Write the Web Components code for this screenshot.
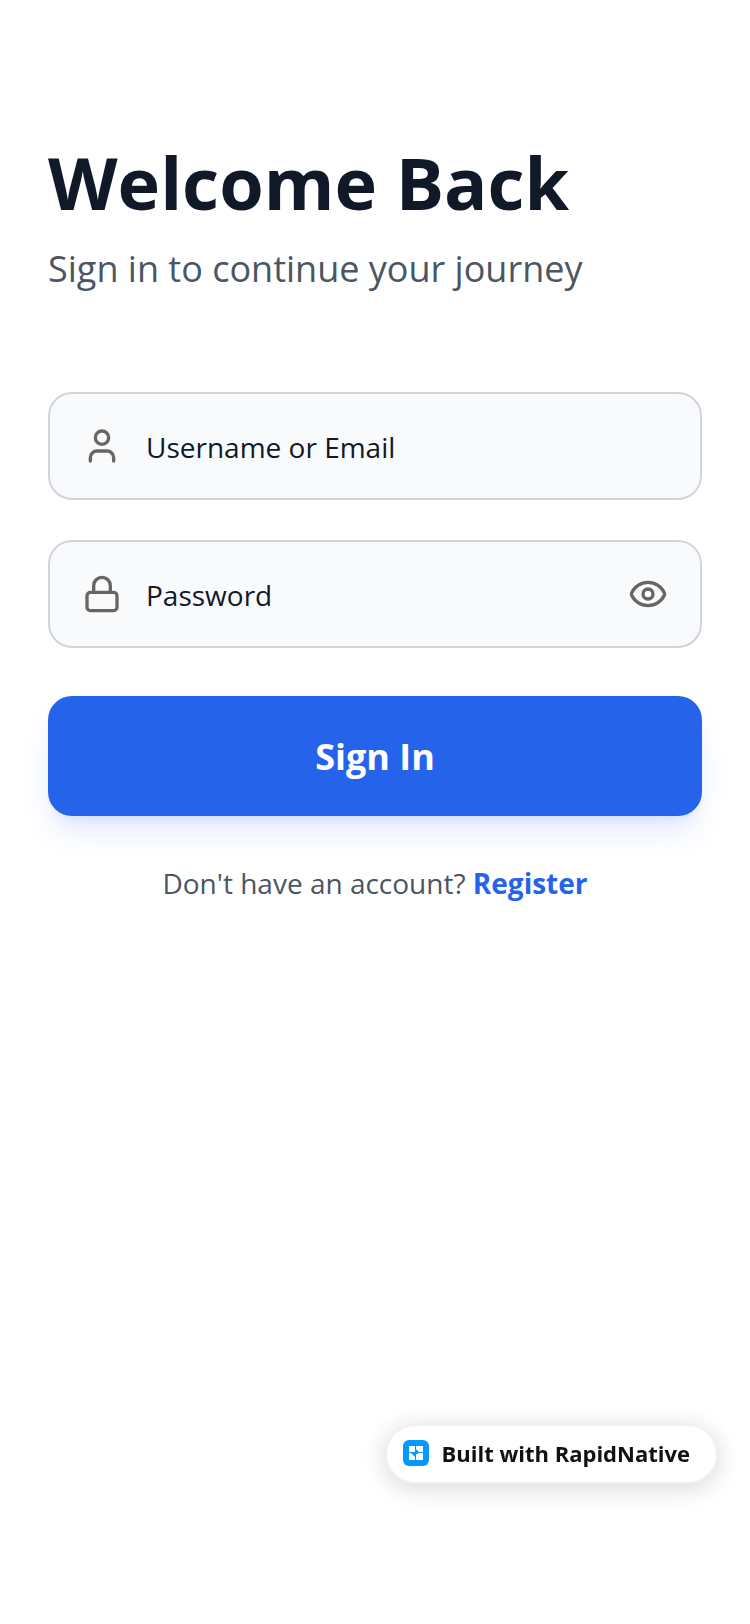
<!DOCTYPE html>
<html lang="en">
<head>
<meta charset="utf-8">
<meta name="viewport" content="width=device-width, initial-scale=1">
<title>Sign In</title>
<style>
  html, body { margin: 0; background: #fff; }
  body { font-family: "Open Sans", "Noto Sans", sans-serif; color: #111827; }
</style>
</head>
<body>
<sign-in-page></sign-in-page>

<template id="page-tpl">
  <style>
    :host { display: block; min-height: 100vh; box-sizing: border-box; padding: 144px 48px 48px; }
    form { display: flex; flex-direction: column; gap: 40px; margin: 0; }
    .note { margin: 40px 0 0; text-align: center; font-size: 28px; line-height: 54px; color: #4b5563; }
    .note a { color: #2563eb; font-weight: 700; text-decoration: none; }
    primary-button { margin-top: 8px; }
    brand-badge { position: fixed; right: 32px; bottom: 140px; }
  </style>
  <main>
    <page-heading>
      <span slot="title">Welcome Back</span>
      <span slot="subtitle">Sign in to continue your journey</span>
    </page-heading>
    <form>
      <text-field type="text" label="Username or Email">
        <line-icon slot="icon" name="user"></line-icon>
      </text-field>
      <text-field type="password" label="Password">
        <line-icon slot="icon" name="lock"></line-icon>
        <icon-button slot="action" label="Show password"><line-icon name="eye"></line-icon></icon-button>
      </text-field>
      <primary-button>Sign In</primary-button>
    </form>
    <p class="note">Don't have an account? <a href="#register">Register</a></p>
  </main>
  <brand-badge>Built with RapidNative</brand-badge>
</template>

<template id="heading-tpl">
  <style>
    :host { display: block; margin-bottom: 96px; }
    h1 { margin: 0 0 22px; font-size: 72px; line-height: 76px; font-weight: 700; color: #111827; }
    p { margin: 0; font-size: 36px; line-height: 54px; color: #4b5563; }
  </style>
  <h1><slot name="title"></slot></h1>
  <p><slot name="subtitle"></slot></p>
</template>

<template id="field-tpl">
  <style>
    :host { display: block; }
    label { display: flex; align-items: center; gap: 24px; box-sizing: border-box; height: 108px; padding: 0 32px; background: #f9fafb; border: 2px solid #d1d5db; border-radius: 24px; }
    input { flex: 1; min-width: 0; padding: 2px 0 0; border: 0; outline: 0; background: none; font: inherit; font-size: 28px; line-height: 40px; color: #111827; }
    input::placeholder { color: #111827; opacity: 1; }
  </style>
  <label><slot name="icon"></slot><input><slot name="action"></slot></label>
</template>

<template id="icon-button-tpl">
  <style>
    :host { display: block; }
    button { display: block; padding: 0; border: 0; background: none; cursor: pointer; }
  </style>
  <button type="button"><slot></slot></button>
</template>

<template id="button-tpl">
  <style>
    :host { display: block; }
    button { display: block; width: 100%; height: 120px; padding: 0; border: 0; border-radius: 24px; background: #2563eb; color: #fff; font: inherit; font-size: 36px; font-weight: 700; cursor: pointer; box-shadow: 0 20px 30px -6px rgba(37, 99, 235, .15), 0 8px 12px -8px rgba(37, 99, 235, .15); }
  </style>
  <button type="button"><slot></slot></button>
</template>

<template id="badge-tpl">
  <style>
    :host { display: block; }
    a { display: flex; align-items: center; gap: 12px; box-sizing: border-box; height: 60px; padding: 0 26px 2px 16px; border: 2px solid #f0f0f0; border-radius: 30px; background: #fff; color: #111; font-size: 22px; line-height: 32px; font-weight: 700; text-decoration: none; white-space: nowrap; box-shadow: 0 4px 24px rgba(0, 0, 0, .16); }
    svg { display: block; width: 26px; height: 26px; }
  </style>
  <a href="#rapidnative">
    <svg viewBox="0 0 26 26" aria-hidden="true">
      <rect width="26" height="26" rx="6" fill="#0599ff"/>
      <path fill="#fff" d="M6 6h6v6H6zM13 6h7v6h-7zM6 13h6v7H6zM13 13h7v7h-7z"/>
      <path fill="#0599ff" d="M13 9l4 4-4 1zM8 13l4-1v5z"/>
    </svg>
    <slot></slot>
  </a>
</template>

<script>
  const stamp = (host, id) => {
    const root = host.attachShadow({ mode: "open" });
    root.append(document.getElementById(id).content.cloneNode(true));
    return root;
  };

  const ICONS = {
    user: '<path d="M19 21v-2a4 4 0 0 0-4-4H9a4 4 0 0 0-4 4v2"/><circle cx="12" cy="7" r="4"/>',
    lock: '<rect x="3" y="11" width="18" height="11" rx="2"/><path d="M7 11V7a5 5 0 0 1 10 0v4"/>',
    eye: '<path d="M2.062 12.348a1 1 0 0 1 0-.696 10.75 10.75 0 0 1 19.876 0 1 1 0 0 1 0 .696 10.75 10.75 0 0 1-19.876 0"/><circle cx="12" cy="12" r="3"/>'
  };

  customElements.define("line-icon", class extends HTMLElement {
    constructor() {
      super();
      this.attachShadow({ mode: "open" });
    }
    connectedCallback() {
      this.shadowRoot.innerHTML = `<style>
        :host { display: block; flex: none; color: #666; }
        svg { display: block; width: 40px; height: 40px; }
      </style>
      <svg viewBox="0 0 24 24" fill="none" stroke="currentColor" stroke-width="2" stroke-linecap="round" stroke-linejoin="round" aria-hidden="true">${ICONS[this.getAttribute("name")]}</svg>`;
    }
  });

  customElements.define("icon-button", class extends HTMLElement {
    constructor() { super(); stamp(this, "icon-button-tpl"); }
    connectedCallback() {
      this.shadowRoot.querySelector("button").setAttribute("aria-label", this.getAttribute("label"));
    }
  });

  customElements.define("text-field", class extends HTMLElement {
    constructor() { super(); stamp(this, "field-tpl"); }
    connectedCallback() {
      const input = this.shadowRoot.querySelector("input");
      input.type = this.getAttribute("type");
      input.placeholder = this.getAttribute("label");
      input.setAttribute("aria-label", this.getAttribute("label"));
    }
  });

  for (const [name, id] of [
    ["page-heading", "heading-tpl"],
    ["primary-button", "button-tpl"],
    ["brand-badge", "badge-tpl"],
    ["sign-in-page", "page-tpl"]
  ]) {
    customElements.define(name, class extends HTMLElement {
      constructor() { super(); stamp(this, id); }
    });
  }
</script>
</body>
</html>
